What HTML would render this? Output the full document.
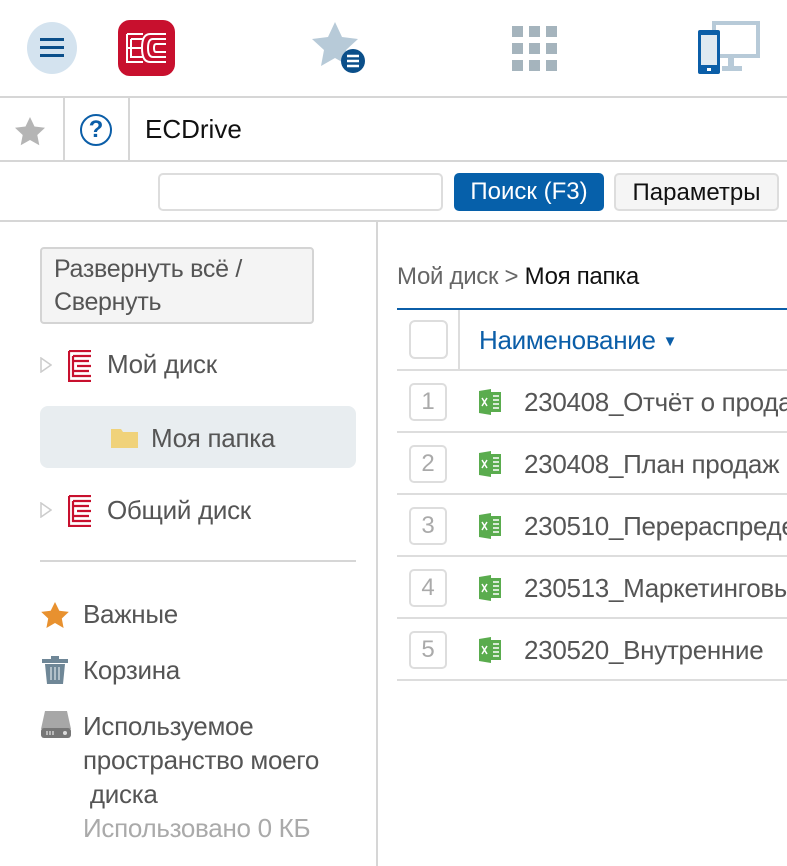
<!DOCTYPE html>
<html><head><meta charset="utf-8"><style>
*{box-sizing:border-box;margin:0;padding:0}
body{width:787px;height:866px;overflow:hidden;background:#fff;font-family:"Liberation Sans","Noto Sans CJK SC",sans-serif;color:#555;position:relative}
.a{position:absolute;white-space:nowrap}
.hl{position:absolute;height:2px;background:#d6d6d6}
.t{font-size:26px;letter-spacing:-0.3px}
.nb{position:absolute;left:12px;width:38px;height:38px;border:2px solid #ddd;border-radius:5px;color:#aaa;font-size:24px;text-align:center;line-height:34px}
.rl{position:absolute;left:0;width:390px;height:2px;background:#ddd}
#r{position:absolute;left:397px;top:222px;width:390px;height:644px;overflow:hidden}
</style></head><body>
<!-- top bar -->
<div class="a" style="left:27px;top:22px;width:50px;height:52px;border-radius:50%;background:#d4e3ef"></div>
<div class="a" style="left:40px;top:38px;width:24px;height:3px;background:#0b4f8a;box-shadow:0 8px 0 #0b4f8a,0 16px 0 #0b4f8a"></div>
<div class="a" style="left:118px;top:20px;width:57px;height:56px;border-radius:12px;background:#c8102e"></div>
<svg class="a" style="left:124px;top:30px" width="46" height="36" viewBox="0 0 46 36" fill="none" stroke="#fff" stroke-width="2"><path d="M3 4h16M3 4v28h16M7 9h12M7 9v18h12M3 18h14M26 4h16M26 4q-8 0-8 14t8 14h16M29 9h13M29 9q-5 0-5 9t5 9h13M32 14h10M32 14q-2 0-2 4t2 4h10"/></svg>
<svg class="a" style="left:310px;top:20px" width="60" height="55" viewBox="0 0 60 55"><path d="M25 2l7 15 16 2-12 11 3 16-14-8-14 8 3-16L2 19l16-2z" fill="#b7cad8"/><circle cx="43" cy="41" r="12" fill="#0b4f8a"/><path d="M37 36h12M37 41h12M37 46h12" stroke="#fff" stroke-width="2.5"/></svg>
<svg class="a" style="left:512px;top:26px" width="45" height="45"><g fill="#a5b4bd"><rect x="0" y="0" width="11" height="11"/><rect x="17" y="0" width="11" height="11"/><rect x="34" y="0" width="11" height="11"/><rect x="0" y="17" width="11" height="11"/><rect x="17" y="17" width="11" height="11"/><rect x="34" y="17" width="11" height="11"/><rect x="0" y="34" width="11" height="11"/><rect x="17" y="34" width="11" height="11"/><rect x="34" y="34" width="11" height="11"/></g></svg>
<svg class="a" style="left:698px;top:20px" width="64" height="56"><rect x="16" y="3" width="44" height="33" fill="none" stroke="#b7cad8" stroke-width="4"/><rect x="30" y="36" width="6" height="10" fill="#b7cad8"/><rect x="24" y="46" width="20" height="5" fill="#b7cad8"/><rect x="0" y="10" width="22" height="44" rx="2" fill="#0b5ea8"/><rect x="3" y="15" width="16" height="30" fill="#dfe9f1"/><rect x="9" y="48" width="4" height="3" fill="#fff"/></svg>
<div class="hl" style="left:0;top:96px;width:787px"></div>
<!-- second row -->
<svg class="a" style="left:14px;top:116px" width="32" height="30"><path d="M16 1l4.5 9.5 10.5 1.3-7.7 7.2 2 10.3L16 24l-9.3 5.3 2-10.3L1 11.8l10.5-1.3z" fill="#b5b5b5"/></svg>
<div class="a" style="left:63px;top:98px;width:2px;height:62px;background:#d6d6d6"></div>
<div class="a" style="left:80px;top:114px;width:32px;height:32px;border:2.5px solid #0b5ea8;border-radius:50%;color:#0b5ea8;font-size:24px;font-weight:bold;text-align:center;line-height:27px">?</div>
<div class="a" style="left:128px;top:98px;width:2px;height:62px;background:#d6d6d6"></div>
<div class="a" style="left:145px;top:114px;font-size:26px;color:#111">ECDrive</div>
<div class="hl" style="left:0;top:160px;width:787px"></div>
<!-- search -->
<div class="a" style="left:158px;top:173px;width:285px;height:38px;border:2px solid #ddd;border-radius:5px"></div>
<div class="a" style="left:454px;top:173px;width:150px;height:38px;background:#0660aa;border-radius:5px;color:#fff;font-size:24px;text-align:center;line-height:38px">Поиск (F3)</div>
<div class="a" style="left:614px;top:173px;width:165px;height:38px;background:#f5f5f5;border:2px solid #ddd;border-radius:5px;color:#111;font-size:24px;text-align:center;line-height:36px">Параметры</div>
<div class="hl" style="left:0;top:220px;width:787px"></div>
<div class="a" style="left:376px;top:222px;width:2px;height:644px;background:#d6d6d6"></div>
<!-- left -->
<div class="a t" style="left:40px;top:247px;width:274px;height:77px;background:#f4f4f4;border:2px solid #d4d4d4;border-radius:4px;padding:4px 0 0 12px;line-height:33px;white-space:normal;font-size:25px">Развернуть всё / Свернуть</div>
<svg class="a" style="left:40px;top:357px" width="12" height="16"><path d="M1 1l10 7-10 7z" fill="none" stroke="#ccc" stroke-width="1.5"/></svg>
<svg class="a" style="left:68px;top:350px" width="24" height="32" fill="none" stroke="#c8102e" stroke-width="2.2"><path d="M1 1h22M1 1v30h22M5 6h18M5 6v20h18M5 11h16M9 16h14M5 21h16"/></svg>
<div class="a t" style="left:107px;top:349px">Мой диск</div>
<div class="a" style="left:40px;top:406px;width:316px;height:62px;background:#e8edf0;border-radius:8px"></div>
<svg class="a" style="left:111px;top:427px" width="27" height="21"><path d="M0 2h10l2 3h15v16H0z" fill="#f0d27a"/></svg>
<div class="a t" style="left:151px;top:423px">Моя папка</div>
<svg class="a" style="left:40px;top:502px" width="12" height="16"><path d="M1 1l10 7-10 7z" fill="none" stroke="#ccc" stroke-width="1.5"/></svg>
<svg class="a" style="left:68px;top:495px" width="24" height="32" fill="none" stroke="#c8102e" stroke-width="2.2"><path d="M1 1h22M1 1v30h22M5 6h18M5 6v20h18M5 11h16M9 16h14M5 21h16"/></svg>
<div class="a t" style="left:107px;top:495px">Общий диск</div>
<div class="hl" style="left:40px;top:560px;width:316px"></div>
<svg class="a" style="left:40px;top:601px" width="30" height="28"><path d="M15 1l4.3 8.7 9.5 1.2-7 6.6 1.8 9.5L15 22l-8.6 5 1.8-9.5-7-6.6 9.5-1.2z" fill="#e8912f"/></svg>
<div class="a t" style="left:83px;top:599px">Важные</div>
<svg class="a" style="left:42px;top:656px" width="26" height="28"><rect x="0" y="3" width="26" height="4" fill="#6f8797"/><rect x="9" y="0" width="8" height="4" fill="#6f8797"/><path d="M3 8h20l-2 20H5z" fill="#6f8797"/><path d="M9 11v13M13 11v13M17 11v13" stroke="#dfe6ea" stroke-width="1.2"/></svg>
<div class="a t" style="left:83px;top:655px">Корзина</div>
<svg class="a" style="left:41px;top:711px" width="30" height="28"><path d="M4 0h22l4 18H0z" fill="#a7a7a7"/><rect x="0" y="17" width="30" height="10" rx="3" fill="#777"/><path d="M6 20v4M9 20v4M12 20v4" stroke="#ddd" stroke-width="1.3"/><circle cx="24" cy="22" r="2" fill="#ddd"/></svg>
<div class="a t" style="left:83px;top:709px;line-height:34px">Используемое<br>пространство моего<br>&nbsp;диска</div>
<div class="a t" style="left:83px;top:813px;color:#aaa">Использовано 0 КБ</div>
<!-- right -->
<div id="r">
<div class="a" style="left:0;top:41px;font-size:24px;color:#666;letter-spacing:-0.3px">Мой диск &gt; <span style="color:#111">Моя папка</span></div>
<div class="a" style="left:0;top:86px;width:390px;height:2px;background:#0b5ea8"></div>
<div class="a" style="left:12px;top:98px;width:39px;height:39px;border:2px solid #ddd;border-radius:6px"></div>
<div class="a" style="left:61px;top:88px;width:2px;height:60px;background:#ddd"></div>
<div class="a" style="left:82px;top:103px;font-size:26px;color:#0b5ea8;letter-spacing:-0.3px">Наименование <span style="font-size:15px;position:relative;top:-3px">▼</span></div>
<div class="rl" style="top:147px"></div>
<div class="nb" style="top:161px">1</div>
<div class="nb" style="top:223px">2</div>
<div class="nb" style="top:285px">3</div>
<div class="nb" style="top:347px">4</div>
<div class="nb" style="top:409px">5</div>
<div class="rl" style="top:209px"></div><div class="rl" style="top:271px"></div><div class="rl" style="top:333px"></div><div class="rl" style="top:395px"></div><div class="rl" style="top:457px"></div>
<svg width="0" height="0" style="position:absolute"><defs><g id="x"><path d="M0 2l12-2v26L0 24z" fill="#5aac4e"/><rect x="12" y="3" width="10" height="20" fill="#5aac4e"/><path d="M3 9l5 8M8 9l-5 8" stroke="#fff" stroke-width="1.5"/><path d="M14 7h6M14 11h6M14 15h6M14 19h6" stroke="#fff" stroke-width="1.5"/></g></defs></svg>
<svg class="a" style="left:82px;top:167px" width="22" height="26"><use href="#x"/></svg>
<svg class="a" style="left:82px;top:229px" width="22" height="26"><use href="#x"/></svg>
<svg class="a" style="left:82px;top:291px" width="22" height="26"><use href="#x"/></svg>
<svg class="a" style="left:82px;top:353px" width="22" height="26"><use href="#x"/></svg>
<svg class="a" style="left:82px;top:415px" width="22" height="26"><use href="#x"/></svg>
<div class="a t" style="left:127px;top:165px">230408_Отчёт о продажах</div>
<div class="a t" style="left:127px;top:227px">230408_План продаж</div>
<div class="a t" style="left:127px;top:289px">230510_Перераспределение</div>
<div class="a t" style="left:127px;top:351px">230513_Маркетинговый</div>
<div class="a t" style="left:127px;top:413px">230520_Внутренние</div>
</div>
</body></html>
